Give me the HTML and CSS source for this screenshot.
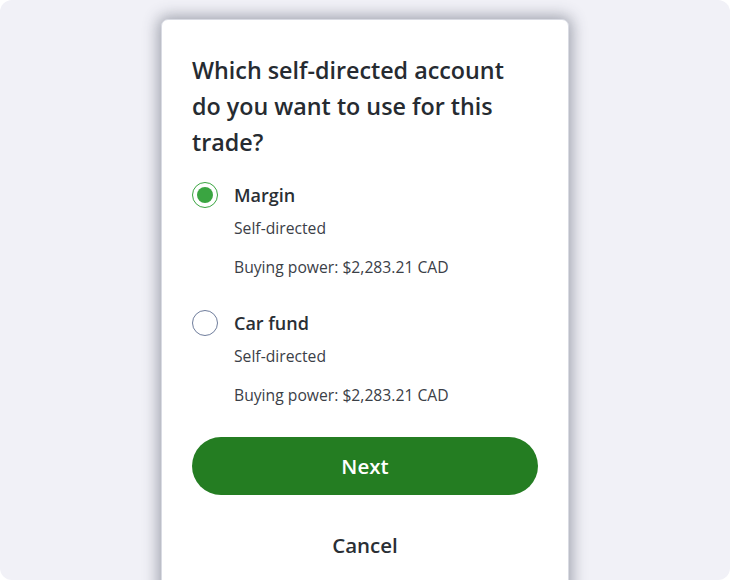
FILE: index.html
```html
<!DOCTYPE html>
<html lang="en">
<head>
<meta charset="utf-8">
<title>Choose account</title>
<link rel="stylesheet" href="styles.css">
</head>
<body>
<div class="stage">
  <div class="card">
    <h1 class="title">Which self-directed account do you want to use for this trade?</h1>
    <div class="options">
      <label class="option">
        <span class="radio radio-on"><span class="dot"></span></span>
        <span class="info">
          <span class="name">Margin</span>
          <span class="sub">Self-directed</span>
          <span class="power">Buying power: $2,283.21 CAD</span>
        </span>
      </label>
      <label class="option">
        <span class="radio"></span>
        <span class="info">
          <span class="name">Car fund</span>
          <span class="sub">Self-directed</span>
          <span class="power">Buying power: $2,283.21 CAD</span>
        </span>
      </label>
    </div>
    <button class="next">Next</button>
    <button class="cancel">Cancel</button>
  </div>
</div>
</body>
</html>
```
FILE: styles.css
```css
html, body {
  margin: 0;
  padding: 0;
  background: #ffffff;
}
body {
  font-family: "Open Sans", "Noto Sans", sans-serif;
  color: #262b31;
}
.stage {
  width: 730px;
  height: 580px;
  background: #f1f1f7;
  border-radius: 12px;
  overflow: hidden;
  display: flex;
  justify-content: center;
  align-items: flex-start;
}
.card {
  margin-top: 19px;
  width: 346px;
  background: #ffffff;
  border: 1px solid #d9dbe3;
  border-radius: 7px;
  padding: 32px 30px 60px 30px;
  box-shadow: 0 0 15px 3px rgba(60, 66, 84, 0.45);
  display: flex;
  flex-direction: column;
}
.title {
  margin: 0;
  font-size: 23.3px;
  font-weight: 600;
  line-height: 36px;
  color: #262b31;
}
.options {
  margin-top: 22px;
  display: flex;
  flex-direction: column;
  gap: 33px;
}
.option {
  display: flex;
  gap: 16px;
  align-items: flex-start;
}
.radio {
  box-sizing: border-box;
  width: 26px;
  height: 26px;
  border-radius: 50%;
  border: 1.5px solid #6f7d9c;
  display: flex;
  align-items: center;
  justify-content: center;
  flex-shrink: 0;
}
.radio-on {
  border-color: #3aa541;
}
.dot {
  width: 16px;
  height: 16px;
  border-radius: 50%;
  background: #3aa541;
}
.info {
  display: flex;
  flex-direction: column;
}
.name {
  font-size: 18px;
  font-weight: 600;
  line-height: 26px;
  color: #2a2f35;
}
.sub {
  margin-top: 10px;
  font-size: 15.7px;
  line-height: 20px;
  color: #3b4047;
}
.power {
  margin-top: 19px;
  font-size: 15.7px;
  line-height: 20px;
  color: #3b4047;
}
.next {
  margin-top: 32px;
  height: 58px;
  border: none;
  border-radius: 29px;
  background: #247d22;
  color: #ffffff;
  font-family: inherit;
  font-size: 20.5px;
  font-weight: 600;
  cursor: pointer;
}
.cancel {
  margin-top: 36px;
  border: none;
  background: none;
  padding: 0;
  height: 28px;
  line-height: 28px;
  color: #2a2f35;
  font-family: inherit;
  font-size: 20.5px;
  font-weight: 600;
}
```
